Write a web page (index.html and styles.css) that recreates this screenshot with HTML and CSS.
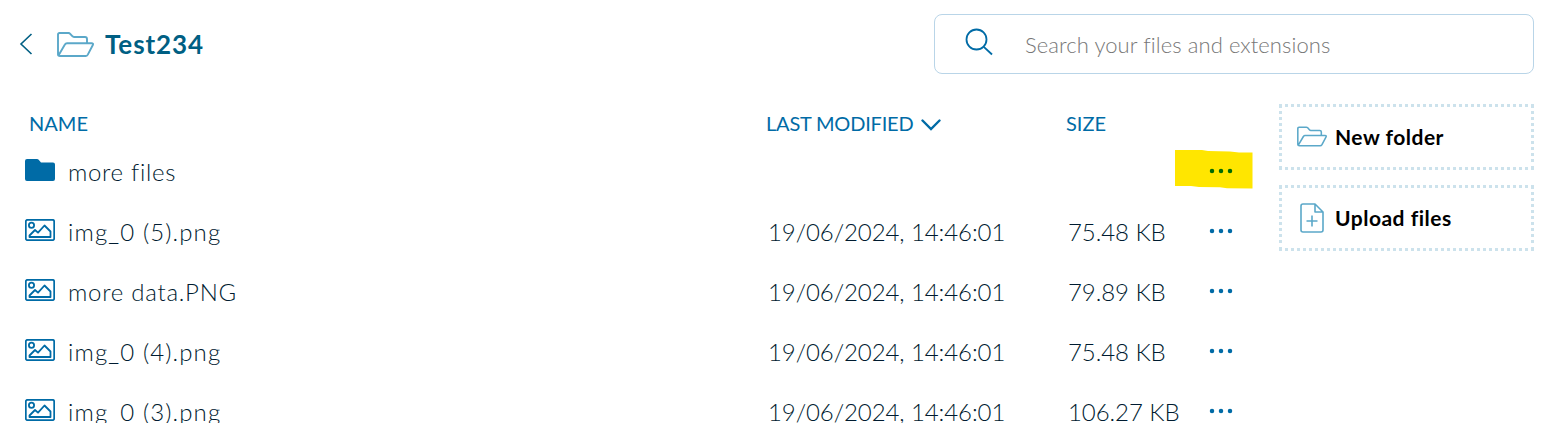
FILE: index.html
```
<!DOCTYPE html>
<html lang="en">
<head>
<meta charset="utf-8">
<title>Test234</title>
<link rel="stylesheet" href="styles.css">
</head>
<body>
<svg class="sprite" aria-hidden="true">
  <symbol id="open-folder" viewBox="0 0 37 25"><path d="M1 22.5V2.5Q1 1 2.500 1H11.500Q12.500 1 13.200 1.800L15.300 4.200Q16 5 17 5H28Q30 5 30 7V11M1 22.500Q1 24 3 24H28.500Q30 24 30.800 22.600L35.700 13.300Q36.800 11.200 34.500 11.200H10Q8.600 11.200 7.900 12.500L1.600 23.200"/></symbol>
  <symbol id="picture" viewBox="0 0 30 22"><rect x=".8" y=".8" width="28.400" height="20.400" rx="1.800"/><circle cx="6.500" cy="6.200" r="2.600"/><path d="M4.500 18V16.500L10 11L13 13.700L19.500 6.500L25.500 12.500V18Z"/></symbol>
  <symbol id="dots" viewBox="0 0 24 6"><circle cx="3" cy="3" r="2.250"/><circle cx="12" cy="3" r="2.250"/><circle cx="21" cy="3" r="2.250"/></symbol>
</svg>
<main class="page">
  <header class="topbar">
    <svg class="back" viewBox="0 0 14 22"><path d="M12.500 1L2 11L12.500 21"/></svg>
    <svg class="line-icon title-icon"><use href="#open-folder"/></svg>
    <h1 class="title">Test234</h1>
    <div class="search">
      <svg class="search-icon" viewBox="0 0 28 28"><circle cx="11.500" cy="11.500" r="10"/><path d="M18.800 18.800L27 26.500"/></svg>
      <span class="placeholder">Search your files and extensions</span>
    </div>
  </header>
  <div class="content">
    <section class="files">
      <div class="row head">
        <span class="h-name">NAME</span>
        <span class="h-date">LAST MODIFIED<svg class="chevron" viewBox="0 0 20 12"><path d="M1.500 1.500L10 10L18.500 1.500"/></svg></span>
        <span class="h-size">SIZE</span>
      </div>
      <div class="row">
        <div class="name"><svg class="file-icon solid" viewBox="0 0 30 22"><path d="M2 0H12Q13 0 13.700 .8L16 3.500H28Q30 3.500 30 5.500V20Q30 22 28 22H2Q0 22 0 20V2Q0 0 2 0Z"/></svg><span class="label l-folder">more files</span></div>
        <span></span><span></span>
        <div class="menu"><svg class="marker" viewBox="0 0 78 39"><path d="M0 0L27 0L33 1L55 1.500L64 2.500H77.500V38.500L52 38.300L45 37.300L24 37L16 36H0Z"/></svg><svg class="dots marked"><use href="#dots"/></svg></div>
      </div>
      <div class="row">
        <div class="name"><svg class="file-icon"><use href="#picture"/></svg><span class="label l-img">img_0 (5).png</span></div>
        <span class="date">19/06/2024, 14:46:01</span><span class="size">75.48 KB</span>
        <div class="menu"><svg class="dots"><use href="#dots"/></svg></div>
      </div>
      <div class="row">
        <div class="name"><svg class="file-icon"><use href="#picture"/></svg><span class="label l-data">more data.PNG</span></div>
        <span class="date">19/06/2024, 14:46:01</span><span class="size">79.89 KB</span>
        <div class="menu"><svg class="dots"><use href="#dots"/></svg></div>
      </div>
      <div class="row">
        <div class="name"><svg class="file-icon"><use href="#picture"/></svg><span class="label l-img">img_0 (4).png</span></div>
        <span class="date">19/06/2024, 14:46:01</span><span class="size">75.48 KB</span>
        <div class="menu"><svg class="dots"><use href="#dots"/></svg></div>
      </div>
      <div class="row">
        <div class="name"><svg class="file-icon"><use href="#picture"/></svg><span class="label l-img">img_0 (3).png</span></div>
        <span class="date">19/06/2024, 14:46:01</span><span class="size">106.27 KB</span>
        <div class="menu"><svg class="dots"><use href="#dots"/></svg></div>
      </div>
    </section>
    <aside class="actions">
      <div class="action"><svg class="line-icon new-icon"><use href="#open-folder"/></svg><span class="a-new">New folder</span></div>
      <div class="action"><svg class="line-icon upload-icon" viewBox="0 0 24 30"><path d="M3 1H15L23 9V27Q23 29 21 29H3Q1 29 1 27V3Q1 1 3 1ZM15 1V9H23M12 12.500V23.500M6.500 18H17.500"/></svg><span class="a-up">Upload files</span></div>
    </aside>
  </div>
</main>
</body>
</html>
```
FILE: styles.css
```
* { box-sizing: border-box; }
body { margin: 0; height: 423px; overflow: hidden; background: #fff; color: #001b30; font-family: Lato, "Open Sans", sans-serif; }
svg { display: block; flex: none; fill: none; }
.sprite { display: none; }
.page { height: 423px; overflow: hidden; padding: 14px 32px 0 19px; }
.topbar { display: flex; height: 60px; align-items: center; }
.back { width: 14px; height: 22px; stroke: #005f83; stroke-width: 1.6; }
.line-icon { stroke: #5ba8c9; stroke-width: 1.9; stroke-linejoin: round; }
.title-icon { width: 37px; height: 25px; margin-left: 24px; }
.title { margin: 0 0 0 11px; font-size: 26px; line-height: 32px; font-weight: 700; color: #005f83; letter-spacing: .9px; }
.search { width: 600px; height: 60px; margin-left: auto; border: 1px solid #b9d5e8; border-radius: 8px; display: flex; align-items: center; padding-left: 30px; }
.search-icon { width: 28px; height: 28px; margin-bottom: 5px; stroke: #006ba6; stroke-width: 1.8; }
.placeholder { margin-left: 32px; padding-top: 2px; font-size: 22px; line-height: 28px; font-weight: 300; color: #777; letter-spacing: .08px; white-space: nowrap; }
.content { display: flex; justify-content: space-between; padding-top: 30px; }
.files { width: 1234px; padding-left: 6px; }
.row { display: grid; grid-template-columns: 743px 300px 108px 77px; height: 60px; align-items: center; white-space: nowrap; font-size: 24px; line-height: 30px; font-weight: 300; }
.head { height: 38px; padding-bottom: 1px; font-size: 20px; font-weight: 400; color: #006ba6; }
.h-name { padding-left: 4px; }
.h-date { display: flex; align-items: center; margin-left: -2px; letter-spacing: -.2px; }
.h-size { margin-left: -2px; }
.chevron { width: 20px; height: 12px; margin: 4px 0 0 8px; stroke: #006ba6; stroke-width: 2.4; stroke-linecap: round; }
.name { display: flex; align-items: center; }
.file-icon { width: 30px; height: 22px; margin-bottom: 4px; stroke: #006ba6; stroke-width: 1.8; stroke-linejoin: round; }
.solid { fill: #006ba6; stroke: none; }
.label { margin-left: 13px; }
.l-folder { letter-spacing: .7px; }
.l-img { letter-spacing: 1.12px; }
.l-data { letter-spacing: .74px; }
.date { letter-spacing: -.09px; }
.size { letter-spacing: -.07px; }
.menu { position: relative; height: 60px; display: flex; align-items: center; padding: 0 0 3px 33px; }
.dots { position: relative; width: 24px; height: 6px; fill: #006ba6; }
.marked { fill: #006b00; }
.marker { position: absolute; left: -1px; top: 8px; width: 78px; height: 39px; fill: #ffe600; }
.actions { width: 255px; display: grid; gap: 15px; align-content: start; }
.action { height: 66px; border: 3px dotted #cce2ec; display: flex; align-items: center; padding: 0 0 1px 15px; font-size: 21px; line-height: 28px; font-weight: 700; color: #000; white-space: nowrap; }
.new-icon { width: 30px; height: 21px; margin-right: 8px; }
.upload-icon { width: 24px; height: 30px; margin: 1px 11px 0 3px; stroke-width: 1.6; }
.a-new { letter-spacing: .5px; }
.a-up { letter-spacing: .5px; }
```
